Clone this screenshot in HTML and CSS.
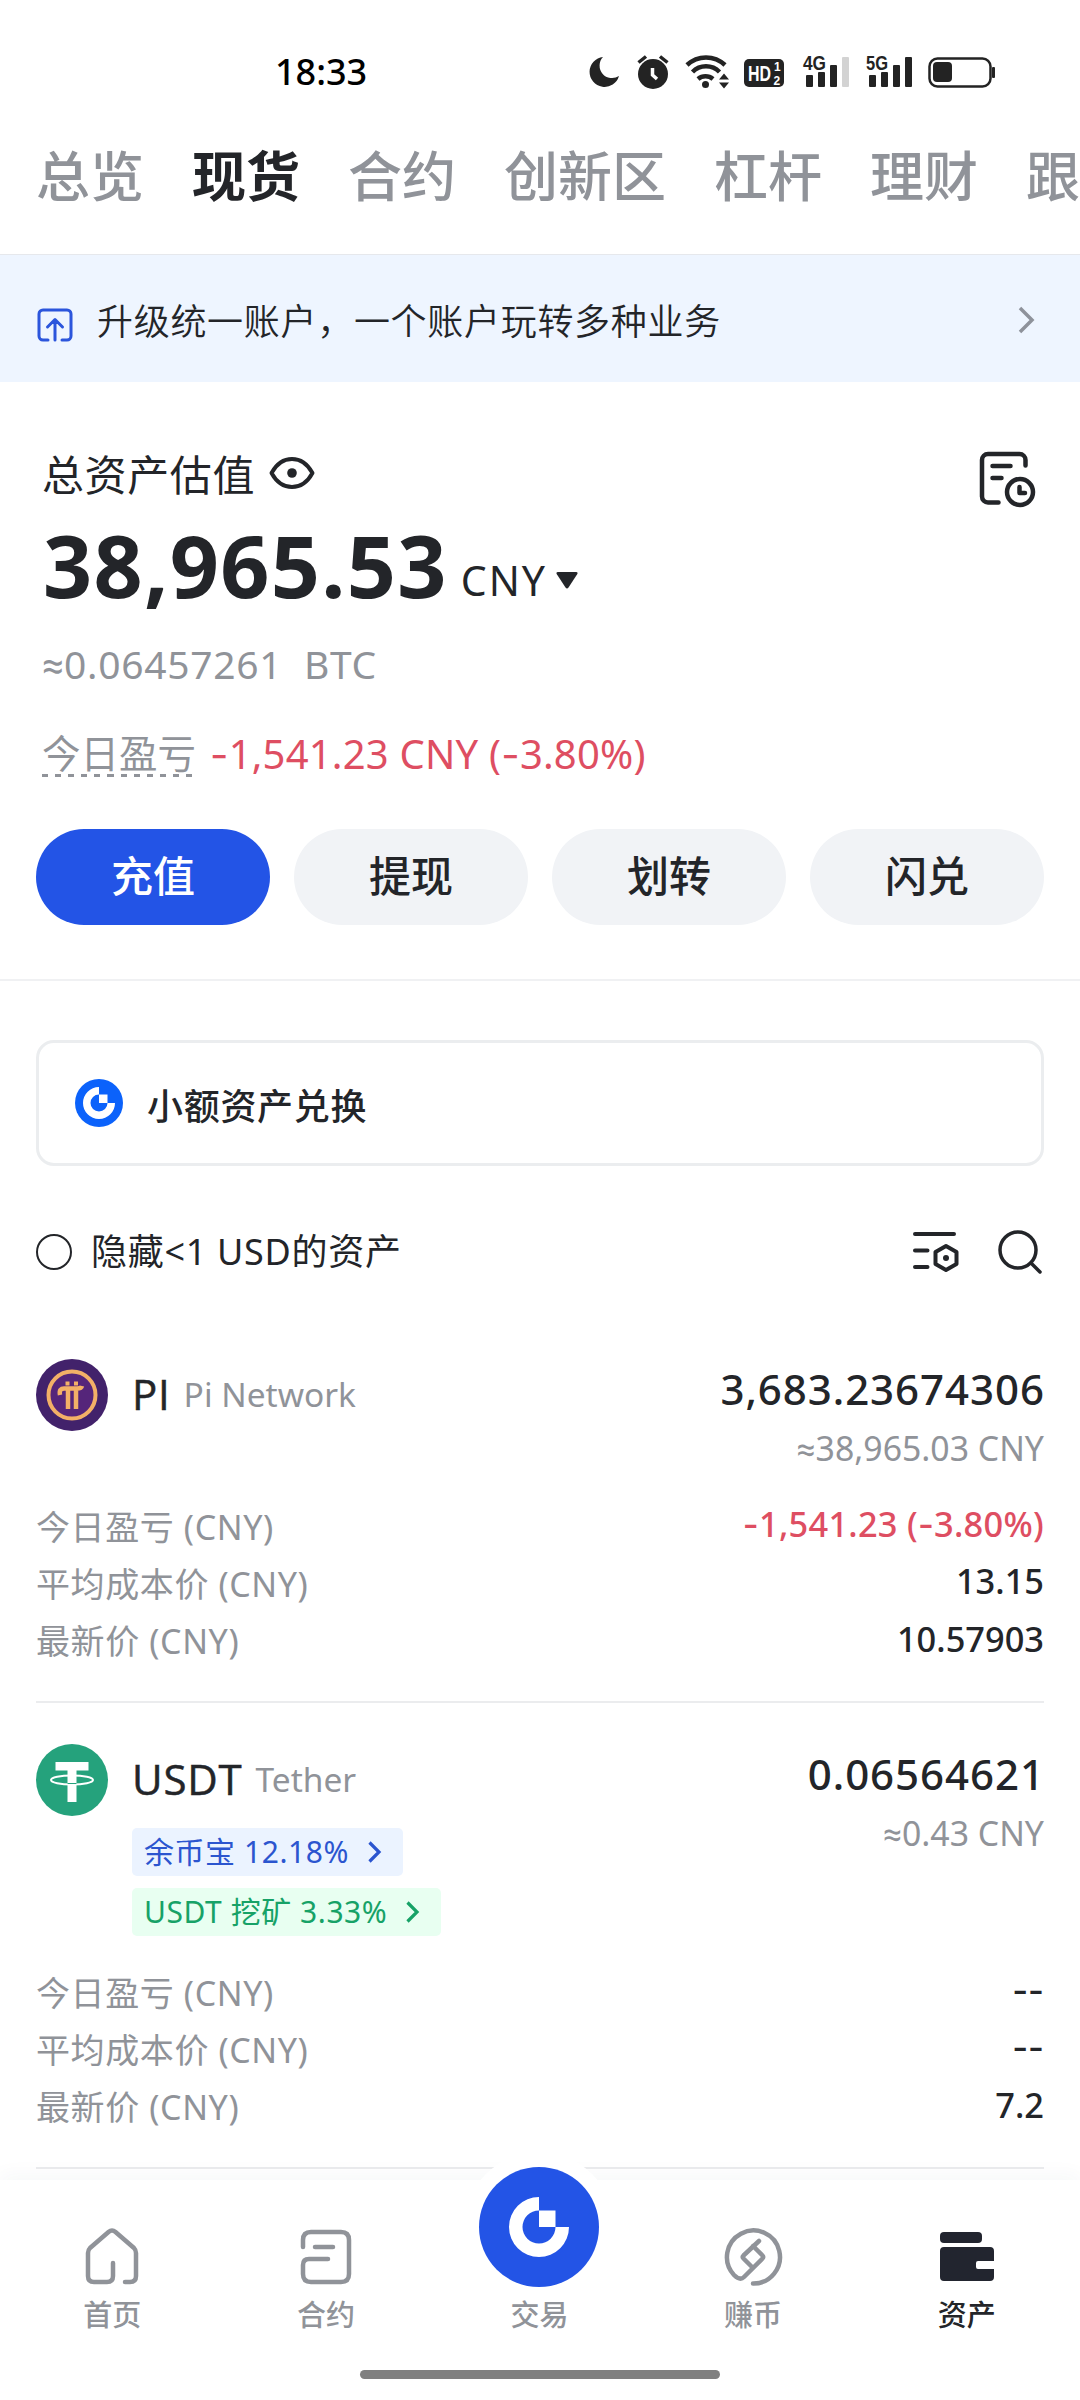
FILE: index.html
```html
<!DOCTYPE html>
<html lang="zh-CN">
<head>
<meta charset="utf-8">
<title>资产</title>
<link rel="stylesheet" href="styles.css">
</head>
<body>
<main class="screen">
  <div class="content">
    <header class="status">
      <span class="time">18:33</span>
      <svg class="status-icons" width="412" height="44" viewBox="588 50 412 44">
        <g fill="#232323">
          <path d="M603 57A15 15 0 1 0 619 76A12.500 12.500 0 0 1 603 57Z"/>
          <circle cx="653" cy="74" r="15"/>
          <path d="M638.500 62.500l7.500-6M667.500 62.500l-7.500-6" stroke="#232323" stroke-width="3.500"/>
          <path d="M652.500 68v7l4.500 4" fill="none" stroke="#fff" stroke-width="3.500"/>
          <g fill="none" stroke="#232323" stroke-width="4.500">
            <path d="M687 65a27.500 27.500 0 0 1 38 0"/>
            <path d="M692.500 72a19 19 0 0 1 27 0"/>
            <path d="M698 79a11.500 11.500 0 0 1 15 0"/>
          </g>
          <circle cx="705.500" cy="84.500" r="3.500"/>
          <path d="M719 79.500l5-6 5 6zM719 82.500h10l-5 6z"/>
          <rect x="744" y="59" width="40" height="28" rx="5"/>
          <rect x="806" y="75" width="7" height="12" rx="1"/><rect x="818" y="72" width="7" height="15" rx="1"/><rect x="830" y="65" width="7" height="22" rx="1"/><rect x="842" y="57" width="7" height="30" rx="1" fill="#d3d3d3"/>
          <rect x="869" y="75" width="7" height="12" rx="1"/><rect x="881" y="72" width="7" height="15" rx="1"/><rect x="893" y="65" width="7" height="22" rx="1"/><rect x="905" y="57" width="7" height="30" rx="1"/>
          <rect x="929.500" y="58.500" width="61" height="28" rx="8" fill="none" stroke="#232323" stroke-width="2.500"/>
          <rect x="933" y="62" width="19" height="20" rx="4"/>
          <rect x="992" y="67" width="3" height="11" rx="1"/>
        </g>
        <g class="status-text">
          <text x="748" y="81" font-size="22" fill="#fff" textLength="23" lengthAdjust="spacingAndGlyphs">HD</text>
          <text x="774" y="71" font-size="12" fill="#fff">1</text>
          <text x="773.500" y="84.500" font-size="12" fill="#fff">2</text>
          <text x="803" y="70" font-size="21" fill="#232323" textLength="23" lengthAdjust="spacingAndGlyphs">4G</text>
          <text x="866" y="70" font-size="21" fill="#232323" textLength="22" lengthAdjust="spacingAndGlyphs">5G</text>
        </g>
      </svg>
    </header>

    <nav class="tabs">
      <span>总览</span><span class="active">现货</span><span>合约</span><span>创新区</span><span>杠杆</span><span>理财</span><span>跟单</span>
    </nav>

    <section class="banner">
      <svg width="36" height="34" viewBox="0 0 36 34" fill="none" stroke="#2b55dc" stroke-width="3" stroke-linecap="round" stroke-linejoin="round"><path d="M11 32H6a4 4 0 0 1-4-4V6a4 4 0 0 1 4-4h24a4 4 0 0 1 4 4v22a4 4 0 0 1-4 4h-5M18 32V12M10.500 19L18 11.500l7.500 7.500"/></svg>
      <span class="banner-text">升级统一账户，一个账户玩转多种业务</span>
      <svg class="banner-arrow" width="18" height="28" viewBox="0 0 18 28" fill="none" stroke="#8e929b" stroke-width="3.500"><path d="M3 2l12 12L3 26"/></svg>
    </section>

    <section class="summary">
      <div class="summary-head">
        <span class="summary-title">总资产估值</span>
        <svg class="eye" width="46" height="32" viewBox="0 0 46 32"><path d="M2.500 16C8 6 15 2 23 2s15 4 20.500 14C38 26 31 30 23 30S8 26 2.500 16Z" fill="none" stroke="#232529" stroke-width="3.900" stroke-linejoin="round"/><circle cx="23" cy="16" r="4.800" fill="#232529"/></svg>
        <svg class="history" width="58" height="58" viewBox="0 0 58 58" fill="none" stroke="#232529" stroke-width="4.500" stroke-linecap="round" stroke-linejoin="round"><path d="M46.500 14.500V9a6 6 0 0 0-6-6H9a6 6 0 0 0-6 6v36.500a6 6 0 0 0 6 6h10.500M13.500 15h18M13.500 27h9"/><circle cx="41" cy="41" r="13"/><path d="M40.500 36v6h5.500"/></svg>
      </div>
      <div class="total"><span class="total-value">38,965.53</span><span class="currency">CNY<svg width="22" height="17" viewBox="0 0 22 17"><path d="M2 0h18q2.500 0 1 2.500L12.500 15.500q-1.500 2-3 0L1 2.500Q-.500 0 2 0Z" fill="#232529"/></svg></span></div>
      <div class="btc"><span class="approx">≈</span>0.06457261&nbsp; BTC</div>
      <div class="pnl"><span class="pnl-label">今日盈亏</span><span class="pnl-value"><span class="dash">-</span>1,541.23 CNY (<span class="dash">-</span>3.80%)</span></div>
      <div class="actions"><button class="primary">充值</button><button>提现</button><button>划转</button><button>闪兑</button></div>
    </section>

    <section class="assets">
      <div class="convert">
        <svg width="48" height="48" viewBox="0 0 48 48"><circle cx="24" cy="24" r="24" fill="#0b62fb"/><path d="M24 8a16 16 0 1 0 16 16h-7.500a8.500 8.500 0 1 1-8.500-8.500Z" fill="#fff"/><path d="M24 15.500h8.500V24H24Z" fill="#fff"/></svg>
        <span>小额资产兑换</span>
      </div>
      <div class="filter">
        <i class="radio"></i><span class="filter-text">隐藏&lt;1 USD的资产</span>
        <svg class="tune" width="48" height="44" viewBox="0 0 48 44" fill="none" stroke="#232529" stroke-width="4" stroke-linecap="round" stroke-linejoin="round"><path d="M3 4h39M3 20.500h12.500M3 37h12.500M34 16l10.500 6v12L34 40l-10.500-6V22Z"/><circle cx="34" cy="28" r="3" fill="#232529" stroke="none"/></svg>
        <svg class="search" width="46" height="46" viewBox="0 0 46 46" fill="none" stroke="#232529" stroke-width="3.500" stroke-linecap="round"><circle cx="21" cy="21" r="18"/><path d="M34 34l9 9"/></svg>
      </div>

      <article class="asset pi">
        <div class="asset-head">
          <svg class="coin" width="72" height="72" viewBox="0 0 72 72"><circle cx="36" cy="36" r="36" fill="#42226b"/><circle cx="36" cy="36" r="23.500" fill="#55257a" stroke="#f3b067" stroke-width="4"/><path d="M24 36c-1-5 1-6.500 4-6.500h13c3 0 4.500-.5 5-2.500M32 30v20M40 30v20" fill="none" stroke="#f3b067" stroke-width="4.500"/><path d="M29.500 22.500h4v4h-4zM38 22.500h4v4h-4z" fill="#f3b067"/></svg>
          <div class="names"><div class="name"><b>PI</b><span>Pi Network</span></div></div>
          <div class="amount"><strong>3,683.23674306</strong><span><span class="approx">≈</span>38,965.03 CNY</span></div>
        </div>
        <dl>
          <div><dt>今日盈亏 (CNY)</dt><dd class="red"><span class="dash">-</span>1,541.23 (<span class="dash">-</span>3.80%)</dd></div>
          <div><dt>平均成本价 (CNY)</dt><dd>13.15</dd></div>
          <div><dt>最新价 (CNY)</dt><dd>10.57903</dd></div>
        </dl>
      </article>

      <article class="asset usdt">
        <div class="asset-head">
          <svg class="coin" width="72" height="72" viewBox="0 0 72 72"><circle cx="36" cy="36" r="36" fill="#25a27c"/><path d="M19.500 18h33v8.500H40.500V58h-9V26.500h-12Z" fill="#fff"/><ellipse cx="36" cy="36" rx="21" ry="4.500" fill="none" stroke="#fff" stroke-width="2"/><path d="M31.500 39.500h9" stroke="#25a27c" stroke-width="1"/></svg>
          <div class="names">
            <div class="name"><b>USDT</b><span>Tether</span></div>
            <div class="tag blue"><span>余币宝 12.18%</span><svg width="16" height="24" viewBox="0 0 16 24" fill="none" stroke="currentColor" stroke-width="3.200"><path d="M2.500 2.500L12 12l-9.500 9.500"/></svg></div>
            <div class="tag green"><span>USDT 挖矿 3.33%</span><svg width="16" height="24" viewBox="0 0 16 24" fill="none" stroke="currentColor" stroke-width="3.200"><path d="M2.500 2.500L12 12l-9.500 9.500"/></svg></div>
          </div>
          <div class="amount"><strong>0.06564621</strong><span><span class="approx">≈</span>0.43 CNY</span></div>
        </div>
        <dl>
          <div><dt>今日盈亏 (CNY)</dt><dd><span class="dash">--</span></dd></div>
          <div><dt>平均成本价 (CNY)</dt><dd><span class="dash">--</span></dd></div>
          <div><dt>最新价 (CNY)</dt><dd>7.2</dd></div>
        </dl>
      </article>
    </section>
  </div>

  <footer class="dock">
    <div class="dock-items">
      <div class="item"><svg width="60" height="60" viewBox="0 0 60 60" fill="none" stroke="#909399" stroke-width="4.500" stroke-linecap="round" stroke-linejoin="round"><path d="M31 36v13q0 6-6 6H12q-6 0-6-6V26q0-3 2-5L26.500 5Q30 2 33.500 5L52 21q2 2 2 5v23q0 6-6 6h-5"/></svg><span>首页</span></div>
      <div class="item"><svg width="60" height="60" viewBox="0 0 60 60" fill="none" stroke="#909399" stroke-width="4.500" stroke-linecap="round" stroke-linejoin="round"><path d="M7 20v-7q0-8 8-8h30q8 0 8 8v34q0 8-8 8H15q-8 0-8-8V38q0-6 6-6h19M19 20h18"/></svg><span>合约</span></div>
      <div class="item trade"><svg width="150" height="150" viewBox="-75 -75 150 150"><circle r="75" fill="#fff"/><circle r="60" fill="#2354e6"/><path d="M0-30A30 30 0 1 0 30 0H16.500A16.500 16.500 0 1 1 0-16.500Z" fill="#fff"/><path d="M0-16.500h16.500V0H0Z" fill="#fff"/></svg><span>交易</span></div>
      <div class="item"><svg width="60" height="60" viewBox="0 0 60 60" fill="none" stroke="#909399" stroke-width="4.500" stroke-linecap="round" stroke-linejoin="round"><path d="M30 56.500A26.500 26.500 0 1 0 11 48q6 6 10 2L39.500 31.500q1.500-1.500 0-3L30 19M36 14L20.500 28.500q-1.500 1.500 0 3L29 40"/></svg><span>赚币</span></div>
      <div class="item on"><svg width="60" height="60" viewBox="0 0 60 60" fill="#22252f"><rect x="3" y="5" width="42" height="11" rx="4"/><path d="M7 20h46q4 0 4 4v10H41q-2 0-2 2v4q0 2 2 2h16v8q0 4-4 4H7q-4 0-4-4V24q0-4 4-4Z"/></svg><span>资产</span></div>
    </div>
    <div class="home-bar"></div>
  </footer>
</main>
</body>
</html>
```
FILE: styles.css
```css
* { box-sizing: border-box; margin: 0; padding: 0; }
body { background: #fff; color: #232529; font-family: "Noto Sans", "Noto Sans CJK SC", sans-serif; }
svg { display: block; flex: none; }
.screen { width: 1080px; height: 2400px; overflow: hidden; display: flex; flex-direction: column; background: #fff; }
.content { height: 2180px; flex: none; overflow: hidden; white-space: nowrap; }
.approx { font-family: Roboto, sans-serif; font-size: 1em; line-height: 1; letter-spacing: 0; }
.dash { font-family: Inter, sans-serif; line-height: 1; }

.status { height: 134px; display: flex; align-items: center; padding: 10px 80px 0 275px; justify-content: space-between; }
.time { font-size: 36px; font-weight: 500; color: #000; line-height: 50px; }
.status-text { font-family: "Liberation Sans", sans-serif; font-weight: 700; }

.tabs { height: 121px; border-bottom: 1px solid #e6e8ec; padding: 0 0 0 36px; display: flex; gap: 48px; font: 500 54px/80px "Noto Sans CJK SC", sans-serif; color: #909399; overflow: hidden; }
.tabs span { flex: none; }
.tabs .active { color: #232529; font-weight: 700; }

.banner { height: 127px; background: #eef5ff; padding: 0 45px 0 37px; display: flex; align-items: center; gap: 24px; }
.banner > svg:first-child { margin-top: 12px; }
.banner-text { flex: 1; font: 350 36px/54px "Noto Sans CJK SC", sans-serif; letter-spacing: .7px; }
.banner-arrow { margin-top: 2px; }

.summary { height: 599px; padding: 62px 36px 0; border-bottom: 2px solid #f0f1f3; }
.summary-head { height: 66px; display: flex; align-items: center; padding: 0 7px 0 6px; }
.summary-title { font: 400 42px/62px "Noto Sans CJK SC", sans-serif; letter-spacing: .6px; margin-top: -8px; }
.eye { margin-left: 14px; margin-top: -9px; }
.history { margin-left: auto; margin-top: 5px; }
.total { height: 110px; display: flex; align-items: center; padding-left: 7px; line-height: 110px; }
.total-value { font-size: 86px; font-weight: 700; letter-spacing: 1.3px; }
.currency { font-size: 41px; letter-spacing: 2px; margin: 30px 0 0 13px; line-height: 60px; display: flex; align-items: center; gap: 9px; }
.btc { height: 60px; line-height: 60px; margin-top: 14px; font-size: 39px; letter-spacing: .7px; color: #909399; padding-left: 6px; }
.pnl { display: flex; height: 60px; line-height: 60px; font-size: 40px; margin-top: 30px; padding-left: 6px; }
.pnl-label { font: 400 38.5px/54px "Noto Sans CJK SC", sans-serif; color: #909399; height: 53px; background: repeating-linear-gradient(90deg, #909399 0 6px, transparent 6px 13.1px) left bottom / 150px 3px no-repeat; }
.pnl-value { color: #de4e62; margin-left: 14px; letter-spacing: .2px; }
.actions { display: grid; grid-template-columns: repeat(4, 1fr); gap: 24px; margin-top: 45px; }
.actions button { height: 96px; border: 0; border-radius: 48px; background: #f1f3f6; color: #232529; padding-bottom: 7px; font: 500 42px/80px "Noto Sans CJK SC", sans-serif; }
.actions .primary { background: #2354e6; color: #fff; }

.assets { padding: 59px 36px 0; }
.convert { height: 126px; border: 3px solid #ebedef; border-radius: 18px; display: flex; align-items: center; padding-left: 36px; gap: 24px; font: 500 36px/54px "Noto Sans CJK SC", sans-serif; letter-spacing: .7px; }
.convert span { margin-top: 2px; }
.filter { height: 60px; margin-top: 56px; padding-right: 1px; display: flex; align-items: center; }
.radio { width: 36px; height: 36px; border: 2.5px solid #232529; border-radius: 50%; }
.filter-text { margin-left: 19px; font-size: 36px; line-height: 54px; letter-spacing: .7px; }
.tune { margin-left: auto; }
.search { margin-left: 37px; }

.asset { border-bottom: 2px solid #ebecee; }
.asset-head { display: flex; align-items: flex-start; }
.names { margin-left: 24px; flex: 1; }
.name { height: 70px; margin-bottom: 14px; display: flex; align-items: center; line-height: 70px; }
.name b { font-family: "Open Sans", sans-serif; font-size: 42px; font-weight: 500; letter-spacing: .8px; -webkit-text-stroke: .5px #232529; }
.name span { font-size: 33.5px; color: #909399; margin-left: 13px; }
.amount { display: flex; flex-direction: column; align-items: flex-end; }
.amount strong { font-size: 42px; font-weight: 500; line-height: 60px; letter-spacing: .95px; margin-right: -.95px; }
.amount > span { font-size: 33.8px; height: 58px; line-height: 58px; color: #909399; }
.asset dl > div { height: 57.3px; display: flex; justify-content: space-between; align-items: center; }
.asset dt { font-size: 34px; line-height: 50px; color: #909399; letter-spacing: .6px; }
.asset dd { font-size: 34.4px; line-height: 50px; font-weight: 500; margin-top: -5px; }
.asset dd.red { color: #de4e62; letter-spacing: .25px; }
.pi { margin-top: 77px; height: 344px; }
.pi dl { margin-top: 21px; }
.usdt { margin-top: 41px; height: 425px; }
.usdt dl { margin-top: 28px; }
.tag { width: max-content; height: 48px; display: flex; align-items: center; gap: 18px; padding: 0 20px 0 12px; border-radius: 5px; font-size: 30px; line-height: 48px; letter-spacing: .55px; margin-top: 12px; }
.blue { background: #ebf3ff; color: #2b55cf; }
.green { background: #e8fff1; color: #17a267; }

.dock { height: 220px; flex: none; background: #fff; box-shadow: 0 -6px 18px rgba(30, 50, 80, .035); display: flex; flex-direction: column; align-items: center; position: relative; }
.dock-items { width: 1068px; margin-right: 1px; display: grid; grid-template-columns: repeat(5, 1fr); height: 190px; }
.item { display: flex; flex-direction: column; align-items: center; justify-content: flex-end; height: 154px; color: #909399; font: 500 29px/42px "Noto Sans CJK SC", sans-serif; }
.item svg { margin-bottom: 5px; }
.item.trade svg { margin-bottom: -10px; }
.item.on { color: #232529; }
.home-bar { width: 360px; height: 9px; border-radius: 5px; background: #808080; }
```
